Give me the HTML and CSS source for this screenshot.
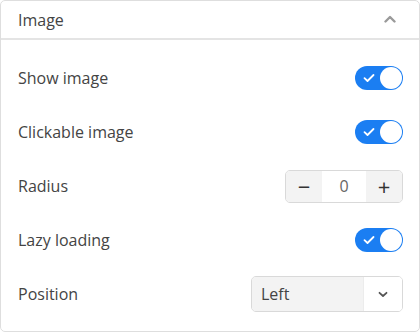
FILE: index.html
```html
<!DOCTYPE html>
<html lang="en">
<head>
<meta charset="UTF-8" />
<title>Image settings</title>
<link rel="stylesheet" href="styles.css">
</head>
<body>
    <div class="panel">
        <div class="panel-head">
            <span class="panel-title">Image</span>
            <svg class="chevron-up" width="12" height="8" viewBox="0 0 12 8">
                <path d="M1.5 6.5 L6 2 L10.5 6.5" fill="none" stroke="#9a9a9a" stroke-width="2.4" stroke-linecap="round" stroke-linejoin="round"/>
            </svg>
        </div>
        <div class="panel-body">
            <div class="row">
                <span class="label">Show image</span>
                <div class="toggle">
                    <svg class="check" width="12" height="10" viewBox="0 0 12 10">
                        <path d="M1.5 5.2 L4.5 8 L10.5 2" fill="none" stroke="#fff" stroke-width="1.8" stroke-linecap="round" stroke-linejoin="round"/>
                    </svg>
                    <span class="knob"></span>
                </div>
            </div>
            <div class="row">
                <span class="label">Clickable image</span>
                <div class="toggle">
                    <svg class="check" width="12" height="10" viewBox="0 0 12 10">
                        <path d="M1.5 5.2 L4.5 8 L10.5 2" fill="none" stroke="#fff" stroke-width="1.8" stroke-linecap="round" stroke-linejoin="round"/>
                    </svg>
                    <span class="knob"></span>
                </div>
            </div>
            <div class="row">
                <span class="label">Radius</span>
                <div class="stepper">
                    <span class="step-btn">&minus;</span>
                    <span class="step-value">0</span>
                    <span class="step-btn">+</span>
                </div>
            </div>
            <div class="row">
                <span class="label">Lazy loading</span>
                <div class="toggle">
                    <svg class="check" width="12" height="10" viewBox="0 0 12 10">
                        <path d="M1.5 5.2 L4.5 8 L10.5 2" fill="none" stroke="#fff" stroke-width="1.8" stroke-linecap="round" stroke-linejoin="round"/>
                    </svg>
                    <span class="knob"></span>
                </div>
            </div>
            <div class="row">
                <span class="label">Position</span>
                <div class="select">
                    <span class="select-value">Left</span>
                    <span class="select-arrow">
                        <svg width="10" height="7" viewBox="0 0 10 7">
                            <path d="M1.5 1.8 L5 5 L8.5 1.8" fill="none" stroke="#555" stroke-width="1.8" stroke-linecap="round" stroke-linejoin="round"/>
                        </svg>
                    </span>
                </div>
            </div>
        </div>
    </div>
</body>
</html>
```

FILE: styles.css
```css
:root {
    --text-color: #444;
    --border-color: #dedede;
    --blue: #1b7ef2;
    --soft-bg: #f3f3f3;
}

body, html {
    margin: 0;
    padding: 0;
    background: #fff;
    font-family: "Open Sans", Arial, sans-serif;
    color: var(--text-color);
}

.panel {
    width: 420px;
    height: 332px;
    box-sizing: border-box;
    border: 1px solid var(--border-color);
    border-radius: 5px;
    overflow: hidden;
}

.panel-head {
    height: 37px;
    display: flex;
    align-items: center;
    justify-content: space-between;
    padding: 0 23px 0 17px;
    border-bottom: 2px solid #e4e4e4;
}

.panel-title {
    font-size: 16px;
}

.chevron-up {
    display: block;
    margin-top: -1px;
}

.panel-body {
    padding: 11px 16px 0 17px;
}

.row {
    height: 54px;
    display: flex;
    align-items: center;
    justify-content: space-between;
}

.label {
    font-size: 16px;
}

.toggle {
    width: 48px;
    height: 24px;
    box-sizing: border-box;
    border-radius: 12px;
    background: var(--blue);
    display: flex;
    align-items: center;
    justify-content: space-between;
    padding: 0 1px 0 8px;
}

.check {
    display: block;
}

.knob {
    width: 22px;
    height: 22px;
    border-radius: 50%;
    background: #fff;
}

.stepper {
    display: flex;
    width: 118px;
    height: 33px;
    box-sizing: border-box;
    border: 1px solid #d9d9d9;
    border-radius: 5px;
    overflow: hidden;
}

.step-btn {
    width: 36px;
    background: var(--soft-bg);
    display: flex;
    align-items: center;
    justify-content: center;
    font-size: 22px;
    color: #333;
}

.step-value {
    flex: 1;
    display: flex;
    align-items: center;
    justify-content: center;
    font-size: 16px;
    color: #666;
    background: #fff;
}

.select {
    display: flex;
    width: 152px;
    height: 36px;
    box-sizing: border-box;
    border: 1px solid #d9d9d9;
    border-radius: 5px;
    overflow: hidden;
}

.select-value {
    flex: 1;
    background: var(--soft-bg);
    display: flex;
    align-items: center;
    padding-left: 9px;
    font-size: 16px;
}

.select-arrow {
    width: 38px;
    display: flex;
    align-items: center;
    justify-content: center;
    background: #fff;
    border-left: 1px solid #ececec;
}
```
